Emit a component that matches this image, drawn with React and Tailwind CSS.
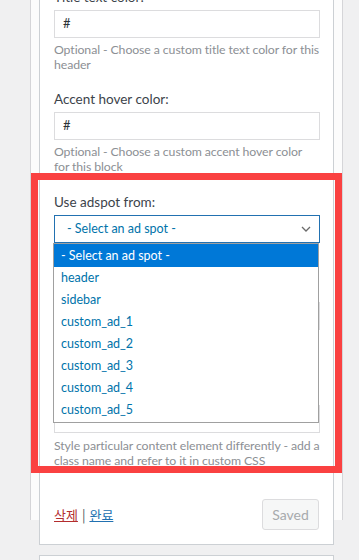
import { useState } from "react";

const spots = [
  "- Select an ad spot -",
  "header",
  "sidebar",
  "custom_ad_1",
  "custom_ad_2",
  "custom_ad_3",
  "custom_ad_4",
  "custom_ad_5",
];

const Label = ({ children, className = "" }) => (
  <div className={`h-[20px] text-[13.5px] leading-[20px] text-[#3c434a] ${className}`}>
    {children}
  </div>
);

// lines are broken by hand so they wrap where the original does
const Desc = ({ lines, className = "" }) => (
  <p
    className={`whitespace-nowrap text-[12.3px] leading-[15px] tracking-[-0.1px] text-[#8c8f94] ${className}`}
  >
    {lines.map((l, i) => (
      <span key={i} className="block">
        {l}
      </span>
    ))}
  </p>
);

const ColorInput = ({ className = "" }) => (
  <div
    className={`flex h-[28px] w-[266px] items-center border border-[#dcdcde] bg-white pl-[8px] text-[13px] text-[#2c3338] ${className}`}
  >
    #
  </div>
);

export default function App() {
  const [active] = useState(0);

  return (
    <div className="relative h-[560px] w-[359px] overflow-hidden bg-[#f0f0f1] font-['Lato',sans-serif]">
      <div className="ml-[30px] h-full w-[313px] border-x border-[#d5d5d8] bg-[#fcfcfc] px-[8px]">
        <div className="-mt-[40px] border border-[#ccd0d4] bg-white pb-[14px] pl-[14px] pr-[13px] pt-[26px]">
          <Label>Title text color:</Label>
          <ColorInput className="mt-[3px]" />
          <Desc
            className="mt-[4px]"
            lines={["Optional - Choose a custom title text color for this", "header"]}
          />

          <Label className="mt-[17px]">Accent hover color:</Label>
          <ColorInput className="mt-[3px]" />
          <Desc
            className="mt-[4px]"
            lines={["Optional - Choose a custom accent hover color", "for this block"]}
          />

          <Label className="mt-[18px]">Use adspot from:</Label>
          <div className="relative mt-[3px] w-[266px]">
            <div className="flex h-[28px] items-center justify-between border border-[#2271b1] bg-white pl-[12px] pr-[8px] text-[12.5px] text-[#0073aa]">
              <span>- Select an ad spot -</span>
              <svg width="10" height="6" viewBox="0 0 10 6" fill="none">
                <path d="M1 1l4 4 4-4" stroke="#6b6b6b" strokeWidth="1.3" />
              </svg>
            </div>
            <ul className="absolute left-[-1px] top-full z-10 w-[266px] border border-[#a0a0a0] bg-white pb-[1px]">
              {spots.map((s, i) => (
                <li
                  key={s}
                  className={`pl-[7px] text-[12.5px] ${
                    i === 0 ? "h-[23px] leading-[23px]" : "h-[22px] leading-[22px]"
                  } ${
                    i === active
                      ? "bg-[#0078d7] text-white"
                      : "text-[#0073aa]"
                  }`}
                >
                  {s}
                </li>
              ))}
            </ul>
          </div>

          {/* fields under the open list: only their right edges show */}
          <div className="h-[56px]" />
          <div className="mt-[3px] h-[28px] w-[266px] border border-[#dcdcde] bg-white" />
          <div className="h-[71px]" />
          <div className="mt-[4px] h-[28px] w-[266px] border border-[#dcdcde] bg-white" />
          <Desc
            className="mt-[5px]"
            lines={[
              "Style particular content element differently - add a",
              "class name and refer to it in custom CSS",
            ]}
          />

          <div className="mt-[31px] flex h-[31px] w-[266px] items-center justify-between">
            <div className="font-['Noto_Sans_CJK_KR',sans-serif] text-[13px] text-[#50575e]">
              <a href="#" className="text-[#b32d2e] underline">
                삭제
              </a>
              <span className="mx-[4px]">|</span>
              <a href="#" className="text-[#2271b1] underline">
                완료
              </a>
            </div>
            <button
              disabled
              className="mr-[1px] h-[31px] w-[57px] rounded-[3px] border border-[#dcdcde] bg-[#f6f7f7] text-[14px] text-[#a7aaad]"
            >
              Saved
            </button>
          </div>
        </div>

        <div className="mt-[10px] h-[40px] border border-[#ccd0d4] bg-[#fdfdfd]" />
      </div>

      <div className="pointer-events-none absolute left-[31px] top-[173px] h-[300px] w-[311px] border-[7px] border-[#fa4141]" />
    </div>
  );
}
